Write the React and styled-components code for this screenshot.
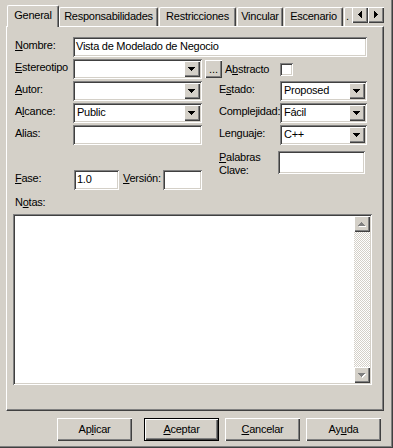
import React from 'react';
import styled, { createGlobalStyle, css } from 'styled-components';

const FACE = '#d4d0c8';

const raised = css`
  background: ${FACE};
  box-shadow: inset 1px 1px #ffffff, inset -1px -1px #404040, inset -2px -2px #808080;
`;

const sunken = css`
  background: #ffffff;
  box-shadow: inset 1px 1px #808080, inset -1px -1px #ffffff, inset 2px 2px #404040,
    inset -2px -2px ${FACE};
`;

const GlobalStyle = createGlobalStyle`
  html, body { margin: 0; padding: 0; background: ${FACE}; }
`;

const Dialog = styled.div`
  box-sizing: border-box;
  width: 393px;
  height: 448px;
  background: ${FACE};
  box-shadow: inset -1px -1px #404040, inset -2px -2px #808080;
  padding-left: 6px;
  font-family: "Liberation Sans", Arial, Helvetica, sans-serif;
  font-size: 11px;
  letter-spacing: -0.25px;
  color: #000;
  display: flex;
  flex-direction: column;
  overflow: hidden;
`;

const TabStrip = styled.div`
  position: relative;
  z-index: 1;
  box-sizing: border-box;
  width: 378px;
  height: 27px;
  margin-bottom: -1px;
  padding-left: 1px;
  display: flex;
  align-items: flex-end;
  overflow: hidden;
`;

const Tab = styled.div`
  box-sizing: border-box;
  flex: none;
  width: ${(p) => p.$w}px;
  height: ${(p) => (p.$active ? 22 : 19)}px;
  margin-right: ${(p) => (p.$active ? 0 : 1)}px;
  margin-bottom: ${(p) => (p.$active ? 0 : 1)}px;
  padding: ${(p) => (p.$active ? 3 : 2)}px 0 0 ${(p) => p.$pl || 0}px;
  background: ${FACE};
  border-top: 1px solid #ffffff;
  border-left: 1px solid #ffffff;
  border-right: 1px solid #404040;
  border-radius: 2px 2px 0 0;
  box-shadow: inset -1px 0 #808080;
  line-height: 13px;
  text-align: ${(p) => p.$align || 'center'};
  white-space: nowrap;
`;

const TabScroller = styled.div`
  position: absolute;
  right: 0;
  top: 7px;
  display: flex;
`;

const SmallButton = styled.div`
  ${raised};
  width: 16px;
  height: 16px;
  flex: none;
  display: block;
  svg { display: block; }
`;

const Panel = styled.div`
  box-sizing: border-box;
  width: 378px;
  height: 385px;
  border: 1px solid;
  border-color: #ffffff #404040 #404040 #ffffff;
  box-shadow: inset -1px -1px #808080;
  padding: 10px 0 0 8px;
  display: flex;
  flex-direction: column;
`;

const Row = styled.div`
  display: flex;
  align-items: flex-start;
  margin-top: ${(p) => p.$mt || 0}px;
`;

const FieldLabel = styled.div`
  box-sizing: border-box;
  flex: none;
  width: ${(p) => p.$w}px;
  margin-left: ${(p) => p.$ml || 0}px;
  padding-top: ${(p) => (p.$pt === undefined ? 2 : p.$pt)}px;
  line-height: 13px;
  white-space: ${(p) => (p.$wrap ? 'normal' : 'nowrap')};
`;

const Key = styled.span`
  text-decoration: underline;
`;

const TextBox = styled.div`
  box-sizing: border-box;
  flex: none;
  width: ${(p) => p.$w}px;
  height: ${(p) => p.$h || 20}px;
  margin-left: ${(p) => p.$ml || 0}px;
  ${sunken};
  padding: 2px 2px 0 3px;
  line-height: 14px;
  white-space: nowrap;
  overflow: hidden;
`;

const ComboFrame = styled.div`
  box-sizing: border-box;
  flex: none;
  width: ${(p) => p.$w}px;
  height: 20px;
  ${sunken};
  padding: 2px;
  display: flex;
`;

const ComboValue = styled.div`
  flex: 1;
  padding-left: 2px;
  line-height: 14px;
  white-space: nowrap;
  overflow: hidden;
`;

const DotsButton = styled.div`
  ${raised};
  box-sizing: border-box;
  flex: none;
  width: 17px;
  height: 18px;
  margin: 1px 0 0 3px;
  padding-top: 3px;
  line-height: 13px;
  text-align: center;
  letter-spacing: 0;
`;

const CheckBox = styled.div`
  flex: none;
  width: 13px;
  height: 13px;
  margin-top: 4px;
  ${sunken};
`;

const Columns = styled.div`
  display: flex;
  margin-top: 2px;
`;

const Column = styled.div`
  flex: none;
  width: ${(p) => p.$w}px;
  margin-left: ${(p) => p.$ml || 0}px;
  display: flex;
  flex-direction: column;
`;

const NotesLabel = styled.div`
  margin-top: 6px;
  line-height: 13px;
`;

const NotesBox = styled.div`
  box-sizing: border-box;
  width: 359px;
  height: 171px;
  margin: 5px 0 0 -2px;
  ${sunken};
  padding: 2px;
  display: flex;
  justify-content: flex-end;
`;

const VScroll = styled.div`
  width: 16px;
  display: flex;
  flex-direction: column;
  justify-content: space-between;
  background: repeating-conic-gradient(#ffffff 0 25%, ${FACE} 0 50%) 0 0 / 2px 2px;
`;

const Footer = styled.div`
  display: flex;
  gap: 6px;
  padding: 7px 0 0 51px;
`;

const PushButton = styled.button`
  box-sizing: border-box;
  width: 75px;
  height: 23px;
  margin: 0 ${(p) => p.$mr || 0}px 0 0;
  padding: 0;
  font: inherit;
  letter-spacing: inherit;
  color: #000;
  line-height: 13px;
  border: ${(p) => (p.$default ? '1px solid #000000' : 'none')};
  ${raised};
`;

const DownArrow = () => (
  <svg width="16" height="16" shapeRendering="crispEdges">
    <path d="M4 6h7v1H4zM5 7h5v1H5zM6 8h3v1H6zM7 9h1v1H7z" fill="#000" />
  </svg>
);

const LeftArrow = () => (
  <svg width="16" height="16" shapeRendering="crispEdges">
    <path d="M6 7h1v1H6zM7 6h1v3H7zM8 5h1v5H8zM9 4h1v7H9z" fill="#000" />
  </svg>
);

const RightArrow = () => (
  <svg width="16" height="16" shapeRendering="crispEdges">
    <path d="M6 4h1v7H6zM7 5h1v5H7zM8 6h1v3H8zM9 7h1v1H9z" fill="#000" />
  </svg>
);

const DisabledUp = () => (
  <svg width="16" height="16" shapeRendering="crispEdges">
    <path d="M8 7h1v1H8zM7 8h3v1H7zM6 9h5v1H6zM5 10h7v1H5z" fill="#fff" />
    <path d="M7 6h1v1H7zM6 7h3v1H6zM5 8h5v1H5zM4 9h7v1H4z" fill="#808080" />
  </svg>
);

const DisabledDown = () => (
  <svg width="16" height="16" shapeRendering="crispEdges">
    <path d="M5 7h7v1H5zM6 8h5v1H6zM7 9h3v1H7zM8 10h1v1H8z" fill="#fff" />
    <path d="M4 6h7v1H4zM5 7h5v1H5zM6 8h3v1H6zM7 9h1v1H7z" fill="#808080" />
  </svg>
);

const Combo = ({ w, value }) => (
  <ComboFrame $w={w}>
    <ComboValue>{value}</ComboValue>
    <SmallButton>
      <DownArrow />
    </SmallButton>
  </ComboFrame>
);

export default function App() {
  return (
    <>
      <GlobalStyle />
      <Dialog>
        <TabStrip>
          <Tab $active $w={52}>General</Tab>
          <Tab $w={99}>Responsabilidades</Tab>
          <Tab $w={77}>Restricciones</Tab>
          <Tab $w={46}>Vincular</Tab>
          <Tab $w={59}>Escenario</Tab>
          <Tab $w={60} $align="left" $pl={1}>.</Tab>
          <TabScroller>
            <SmallButton>
              <LeftArrow />
            </SmallButton>
            <SmallButton>
              <RightArrow />
            </SmallButton>
          </TabScroller>
        </TabStrip>

        <Panel>
          <Row>
            <FieldLabel $w={58}>
              <Key>N</Key>ombre:
            </FieldLabel>
            <TextBox $w={294}>Vista de Modelado de Negocio</TextBox>
          </Row>
          <Row $mt={2}>
            <FieldLabel $w={58}>
              <Key>E</Key>stereotipo
            </FieldLabel>
            <Combo w={129} value="" />
            <DotsButton>...</DotsButton>
            <FieldLabel $w={55} $ml={3} $pt={4}>
              A<Key>b</Key>stracto
            </FieldLabel>
            <CheckBox />
          </Row>

          <Columns>
            <Column $w={187}>
              <Row>
                <FieldLabel $w={58}>
                  <Key>A</Key>utor:
                </FieldLabel>
                <Combo w={129} value="" />
              </Row>
              <Row $mt={2}>
                <FieldLabel $w={58}>
                  A<Key>l</Key>cance:
                </FieldLabel>
                <Combo w={129} value="Public" />
              </Row>
              <Row $mt={2}>
                <FieldLabel $w={58}>Alias:</FieldLabel>
                <TextBox $w={129} />
              </Row>
              <Row $mt={25}>
                <FieldLabel $w={59}>
                  <Key>F</Key>ase:
                </FieldLabel>
                <TextBox $w={45}>1.0</TextBox>
                <FieldLabel $w={40} $ml={4}>
                  <Key>V</Key>ersión:
                </FieldLabel>
                <TextBox $w={39} />
              </Row>
            </Column>

            <Column $w={148} $ml={17}>
              <Row>
                <FieldLabel $w={61}>
                  E<Key>s</Key>tado:
                </FieldLabel>
                <Combo w={87} value="Proposed" />
              </Row>
              <Row $mt={2}>
                <FieldLabel $w={61}>Complejidad:</FieldLabel>
                <Combo w={87} value="Fácil" />
              </Row>
              <Row $mt={2}>
                <FieldLabel $w={61}>Lenguaje:</FieldLabel>
                <Combo w={87} value="C++" />
              </Row>
              <Row $mt={6}>
                <FieldLabel $w={59} $pt={0} $wrap>
                  <Key>P</Key>alabras
                  <br />
                  Clave:
                </FieldLabel>
                <TextBox $w={87} $h={23} />
              </Row>
            </Column>
          </Columns>

          <NotesLabel>
            N<Key>o</Key>tas:
          </NotesLabel>
          <NotesBox>
            <VScroll>
              <SmallButton>
                <DisabledUp />
              </SmallButton>
              <SmallButton>
                <DisabledDown />
              </SmallButton>
            </VScroll>
          </NotesBox>
        </Panel>

        <Footer>
          <PushButton $mr={6}>
            Ap<Key>l</Key>icar
          </PushButton>
          <PushButton $default>
            <Key>A</Key>ceptar
          </PushButton>
          <PushButton>
            <Key>C</Key>ancelar
          </PushButton>
          <PushButton>
            Ay<Key>u</Key>da
          </PushButton>
        </Footer>
      </Dialog>
    </>
  );
}
